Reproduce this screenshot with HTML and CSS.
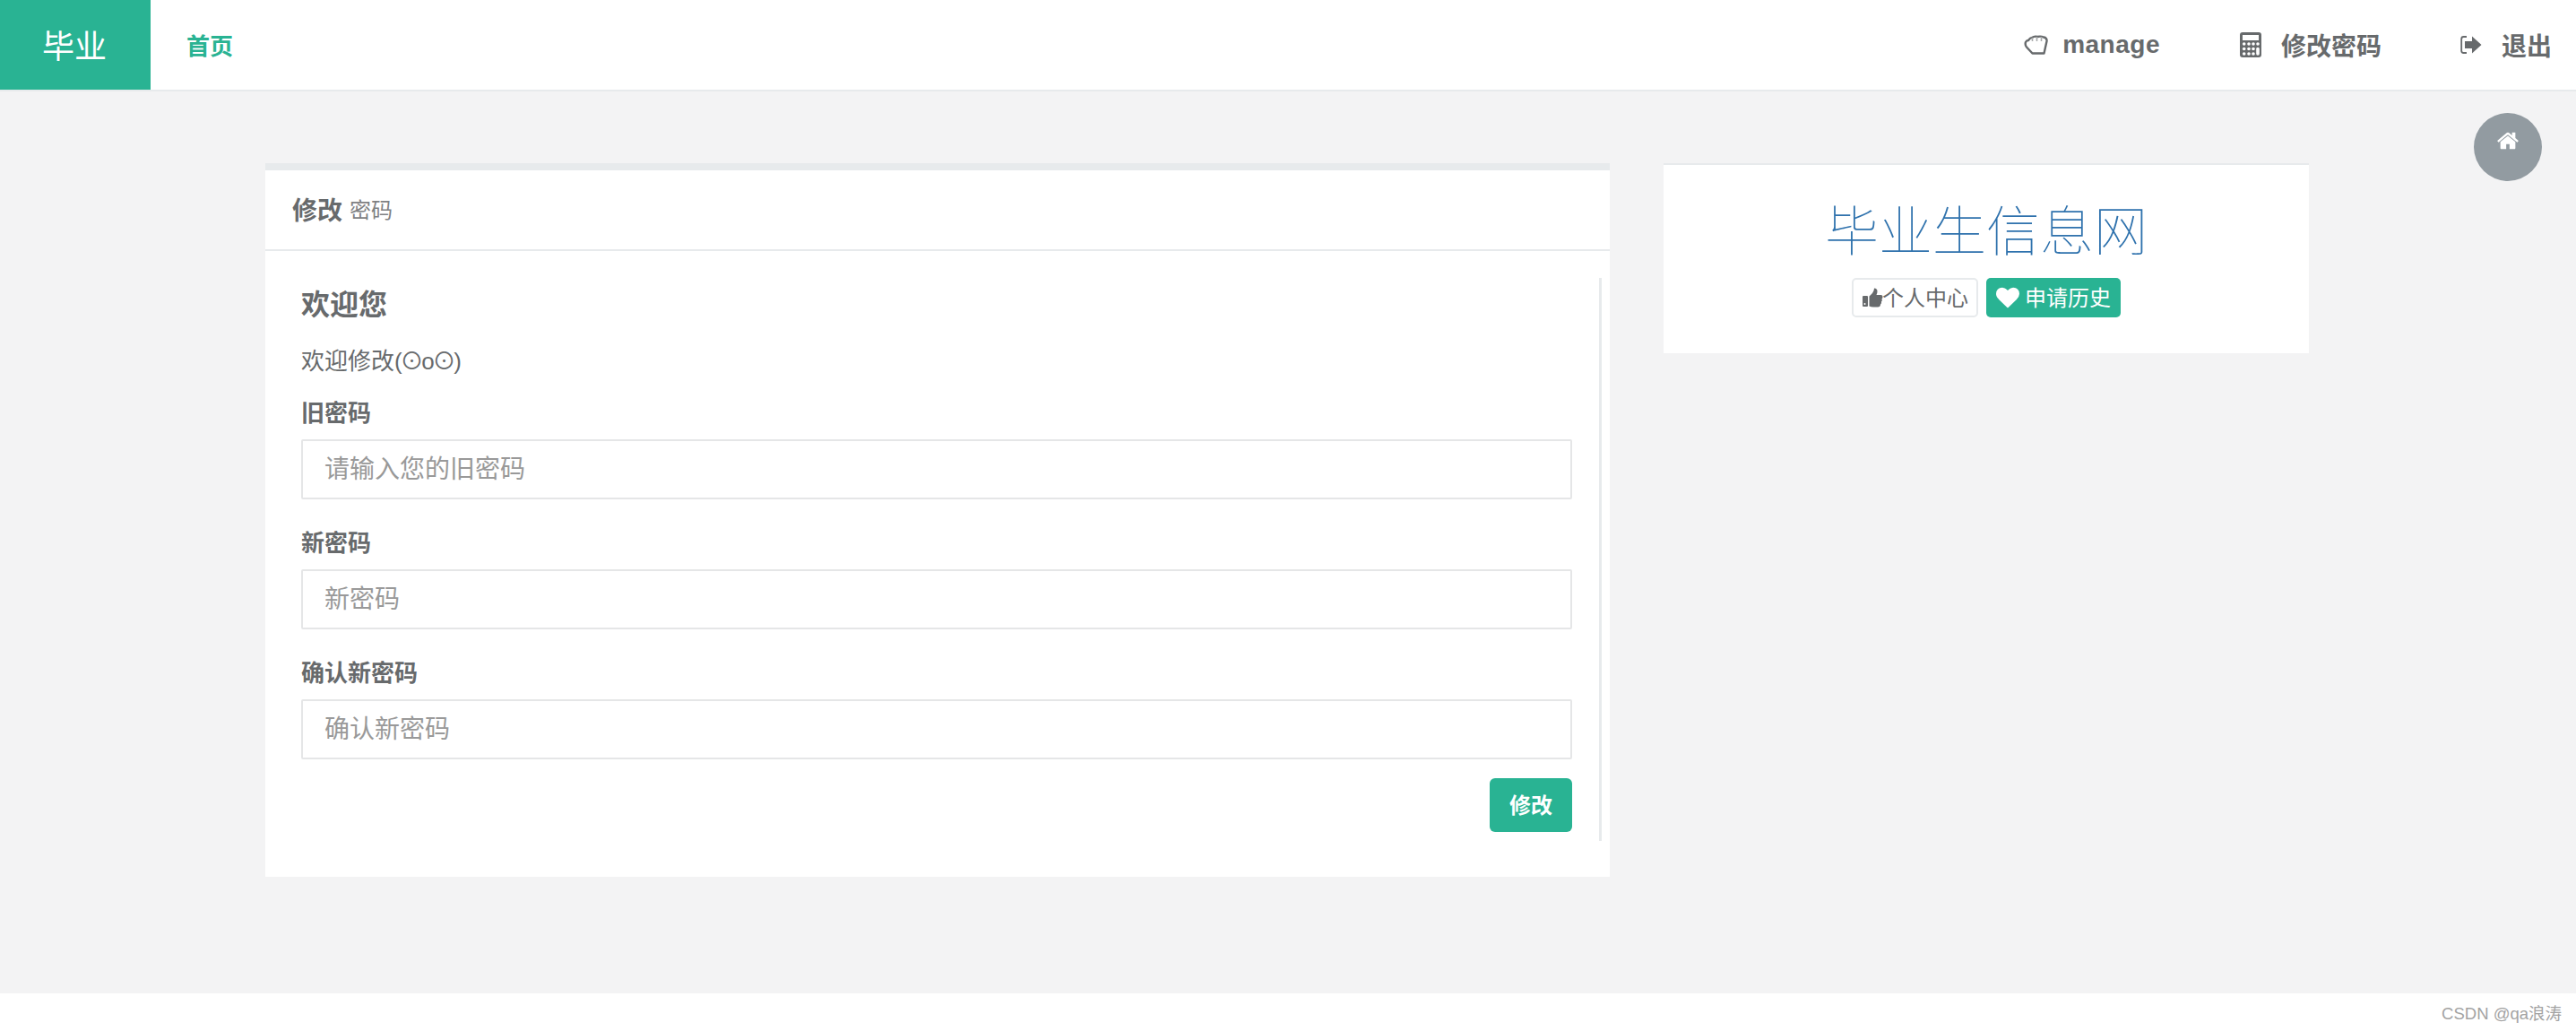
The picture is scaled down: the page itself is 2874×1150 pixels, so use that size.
FILE: index.html
```html
<!DOCTYPE html>
<html lang="zh">
<head>
<meta charset="utf-8"/>
<title>修改密码</title>
<link rel="stylesheet" href="styles.css">
</head>
<body>
<header class="topbar">
  <a class="brand">毕业</a>
  <a class="nav-home">首页</a>
  <nav class="nav-right">
    <a class="nav-item nav-manage">
      <svg class="nav-icon" viewBox="0 0 27 22"><path d="M5 6 Q7 3 9 3 Q12 1 15 2 Q19 1 22 2.500 Q26 3 25.500 7 L22.500 20.500 H9.500 L3 13.500 Q1 11 2 8 Q3 6 5 6 Z" fill="none" stroke="#676a6c" stroke-width="2.400" stroke-linejoin="round"/><path d="M9.500 3 V7 M14.500 2 V7 M19.500 2 V7" fill="none" stroke="#a9abac" stroke-width="1.600"/></svg>
      manage
    </a>
    <a class="nav-item nav-password">
      <svg class="nav-icon" viewBox="0 0 24 28"><rect width="24" height="28" rx="3" fill="#676a6c"/><rect x="3" y="3" width="18" height="6" fill="#fff"/><g fill="#fff"><circle cx="4.700" cy="13" r="1.800"/><circle cx="10" cy="13" r="1.800"/><circle cx="15" cy="13" r="1.800"/><circle cx="20" cy="13" r="1.800"/><circle cx="4.700" cy="18.500" r="1.800"/><circle cx="10" cy="18.500" r="1.800"/><circle cx="15" cy="18.500" r="1.800"/><circle cx="4.700" cy="24" r="1.800"/><circle cx="10" cy="24" r="1.800"/><circle cx="15" cy="24" r="1.800"/><rect x="18.200" y="16.800" width="3.600" height="9" rx="1.800"/></g></svg>
      修改密码
    </a>
    <a class="nav-item nav-logout">
      <svg class="nav-icon" viewBox="0 0 24 20"><path d="M7 1 H3.500 Q1.200 1 1.200 3.500 V16.500 Q1.200 19 3.500 19 H7" fill="none" stroke="#676a6c" stroke-width="1.800"/><path d="M5 6 H13 V0.500 L23.500 10 L13 19.500 V14 H5 Z" fill="#676a6c"/></svg>
      退出
    </a>
  </nav>
</header>

<a class="home-btn">
  <svg viewBox="0 0 1792 1792"><path fill="#fff" d="M1472 992v480q0 26-19 45t-45 19h-384v-384h-256v384h-384q-26 0-45-19t-19-45v-480q0-1 .5-3t.5-3l575-474 575 474q1 2 1 6zm223-69l-62 74q-8 9-21 11h-3q-13 0-21-7l-692-577-692 577q-12 8-24 7-13-2-21-11l-62-74q-8-10-7-23.500t11-21.500l719-599q32-26 76-26t76 26l244 204v-195q0-14 9-23t23-9h192q14 0 23 9t9 23v408l219 182q10 8 11 21.500t-7 23.500z"/></svg>
</a>

<main class="content">
  <section class="panel panel-form">
    <div class="panel-title"><b>修改</b> <small>密码</small></div>
    <div class="panel-body">
      <form class="form-inner">
        <h3>欢迎您</h3>
        <p class="intro">欢迎修改<span class="face">(⊙o⊙)</span></p>
        <div class="form-group">
          <label>旧密码</label>
          <input type="password" placeholder="请输入您的旧密码">
        </div>
        <div class="form-group">
          <label>新密码</label>
          <input type="password" placeholder="新密码">
        </div>
        <div class="form-group">
          <label>确认新密码</label>
          <input type="password" placeholder="确认新密码">
        </div>
        <div class="form-actions"><button type="button">修改</button></div>
      </form>
    </div>
  </section>

  <aside class="panel-side">
    <h1>毕业生信息网</h1>
    <div class="side-btns">
      <a class="btn-white">
        <svg class="thumb" viewBox="0 0 24 22"><path fill="#676a6c" d="M1 10 Q1 9 2 9 H6 Q7 9 7 10 V20 Q7 21 6 21 H2 Q1 21 1 20 Z M8.500 9.500 L12 6 Q14 3.500 14 0.500 Q17.500 0.500 17.500 4 Q17.500 6 16.500 8 H21.500 Q23.500 8 23.500 10 Q23.500 11.500 22.500 12.500 Q23.500 14.500 22 15.500 Q22.500 17.500 21 18.500 Q21 21.500 18 21.500 H13 Q10.500 21.500 8.500 20.500 Z"/><circle cx="3.500" cy="18" r="1" fill="#fff"/></svg>个人中心
      </a>
      <a class="btn-green">
        <svg class="heart" viewBox="0 0 1792 1792"><path fill="#fff" d="M896 1664q-26 0-44-18l-624-602q-10-8-27.500-26t-55.500-65.500-68-97.500-53.500-121-23.500-138q0-220 127-344t351-124q62 0 126.500 21.500t120 58 95.500 68.500 76 68q36-36 76-68t95.500-68.500 120-58 126.500-21.500q224 0 351 124t127 344q0 221-229 450l-623 600q-18 18-44 18z"/></svg>
        申请历史
      </a>
    </div>
  </aside>
</main>

<footer class="footer">CSDN @qa浪涛</footer>
</body>
</html>
```

FILE: styles.css
```css
* {
  box-sizing: border-box;
}
body {
  margin: 0;
  height: 100vh;
  display: flex;
  flex-direction: column;
  background-color: #f3f3f4;
  color: #676a6c;
  font-family: "Liberation Sans", "Noto Sans CJK SC", sans-serif;
  overflow: hidden;
}
.topbar {
  height: 102px;
  display: flex;
  align-items: stretch;
  background: #fff;
  border-bottom: 2px solid #e7eaec;
}
.brand {
  width: 168px;
  display: flex;
  align-items: center;
  justify-content: center;
  padding: 0 2px 2px 0;
  background: #29b393;
  color: #fff;
  font-size: 36px;
}
.nav-home {
  margin-left: 40px;
  padding-bottom: 2px;
  display: flex;
  align-items: center;
  color: #29b393;
  font-size: 26px;
  font-weight: bold;
}
.nav-right {
  margin-left: auto;
  display: flex;
  align-items: center;
  font-size: 28px;
  font-weight: bold;
  padding-right: 27px;
}
.nav-item {
  display: flex;
  align-items: center;
  gap: 22px;
}
.nav-manage {
  gap: 16px;
  margin-right: 89px;
  letter-spacing: 0.500px;
}
.nav-password {
  margin-right: 88px;
}
.nav-manage .nav-icon {
  width: 27px;
  height: 22px;
}
.nav-password .nav-icon {
  width: 24px;
  height: 28px;
}
.nav-logout .nav-icon {
  width: 24px;
  height: 20px;
}
.home-btn {
  position: absolute;
  left: 2760px;
  top: 126px;
  width: 76px;
  height: 76px;
  border-radius: 50%;
  background: #929ba1;
  display: flex;
  justify-content: center;
  padding-top: 18px;
}
.home-btn svg {
  width: 26px;
  height: 26px;
}
.content {
  flex: 1;
  display: flex;
  align-items: flex-start;
  gap: 60px;
  padding: 80px 0 0 296px;
}
.panel-form {
  width: 1500px;
  background: #fff;
  border-top: 8px solid #e7eaec;
}
.panel-title {
  height: 90px;
  display: flex;
  align-items: center;
  gap: 8px;
  padding: 0 0 3px 30px;
  border-bottom: 2px solid #e7eaec;
}
.panel-title b {
  font-size: 28px;
}
.panel-title small {
  font-size: 24px;
  color: #7f8183;
}
.panel-body {
  padding: 30px 9px 40px 40px;
}
.form-inner {
  padding-right: 30px;
  border-right: 3px solid #e7eaec;
}
h3 {
  margin: 0;
  font-size: 32px;
  line-height: 60px;
}
.intro {
  margin: 14px 0 20px;
  font-size: 26px;
  line-height: 38px;
}
.face {
  letter-spacing: -2.200px;
}
.form-group {
  margin-bottom: 30px;
}
label {
  display: block;
  font-size: 26px;
  font-weight: bold;
  line-height: 38px;
  margin: 0 0 10px;
}
input {
  display: block;
  width: 100%;
  height: 67px;
  border: 2px solid #e5e6e7;
  border-radius: 2px;
  padding: 0 24px;
  font-family: inherit;
  font-size: 28px;
  outline: none;
}
input::placeholder {
  color: #999;
}
.form-actions {
  display: flex;
  justify-content: flex-end;
  margin-top: -9px;
  padding-bottom: 10px;
}
button {
  width: 92px;
  height: 60px;
  border: none;
  border-radius: 6px;
  padding: 0 0 3px;
  background: #29b393;
  color: #fff;
  font-family: inherit;
  font-size: 24px;
  font-weight: bold;
}
.panel-side {
  width: 720px;
  height: 212px;
  background: #fff;
  border-top: 2px solid #e7eaec;
  text-align: center;
}
h1 {
  margin: 0;
  padding-top: 41px;
  font-size: 60px;
  font-weight: 100;
  line-height: 70px;
  color: #2f72ad;
}
.side-btns {
  margin-top: 15px;
  display: flex;
  justify-content: center;
  gap: 9px;
}
.btn-white,
.btn-green {
  height: 44px;
  display: flex;
  align-items: center;
  padding-bottom: 3px;
  border-radius: 5px;
  font-size: 24px;
}
.btn-white {
  width: 141px;
  padding-left: 9px;
  border: 2px solid #e7eaec;
}
.btn-green {
  width: 150px;
  padding-left: 11px;
  gap: 6px;
  background: #29b393;
  color: #fff;
}
.thumb {
  width: 24px;
  height: 22px;
  margin: 3px -1px 0 0;
}
.heart {
  width: 26px;
  height: 26px;
  margin-top: 3px;
}
.footer {
  height: 42px;
  display: flex;
  align-items: center;
  justify-content: flex-end;
  padding-right: 16px;
  background: #fff;
  color: #a3a3a3;
  font-size: 18.500px;
}
```
